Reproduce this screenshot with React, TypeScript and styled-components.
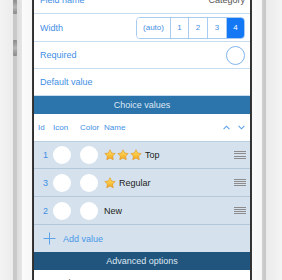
import styled, { createGlobalStyle } from "styled-components";

const Global = createGlobalStyle`
  html, body {
    margin: 0;
    padding: 0;
    background: #f2f2f2;
  }
  body {
    font-family: "Liberation Sans", Arial, sans-serif;
  }
`;

const Phone = styled.div`
  display: flex;
  width: 282px;
  height: 280px;
  overflow: hidden;
`;

const LeftBezel = styled.div`
  width: 34px;
  flex: none;
  display: flex;
  flex-direction: column;
  background: linear-gradient(
    to right,
    #f3f3f3 0,
    #ececec 13px,
    #c9c9c9 13px,
    #c9c9c9 17px,
    #dcdcdc 17px,
    #e6e6e6 22px,
    #fbfbfb 22px,
    #f7f7f7 32px,
    #3c3c3c 32px,
    #2a2a2a 34px
  );
`;

const SideButton = styled.div<{ $top: number; $h: number }>`
  margin-top: ${(p) => p.$top}px;
  margin-left: 13px;
  width: 4px;
  height: ${(p) => p.$h}px;
  background: linear-gradient(to bottom, #8a8a8a, #b5b5b5 50%, #8a8a8a);
  border-radius: 1px;
`;

const RightBezel = styled.div`
  flex: 1;
  background: linear-gradient(
    to right,
    #2e2e2e 0,
    #3a3a3a 2px,
    #fafafa 2px,
    #f6f6f6 12px,
    #cfcfcf 12px,
    #c6c6c6 16px,
    #ebebeb 16px,
    #f4f4f4 32px
  );
`;

const Screen = styled.div`
  width: 216px;
  flex: none;
  height: 280px;
  overflow: hidden;
  background: #fff;
  display: flex;
  flex-direction: column;
`;

const FormRow = styled.div<{ $h: number; $first?: boolean }>`
  display: flex;
  align-items: center;
  justify-content: space-between;
  flex: none;
  height: ${(p) => p.$h}px;
  margin-top: ${(p) => (p.$first ? -14 : 0)}px;
  padding: 0 5px 0 6px;
  box-sizing: border-box;
  border-bottom: 1px solid #c9ddf0;
`;

const Label = styled.span`
  color: #3f8fe4;
  font-size: 9px;
`;

const Value = styled.span`
  color: #555;
  font-size: 9px;
`;

const Segmented = styled.div`
  display: flex;
  height: 22px;
  box-sizing: border-box;
  border: 1px solid #a8cbf2;
  border-radius: 4px;
  overflow: hidden;
`;

const Segment = styled.div<{ $w: number; $on?: boolean }>`
  width: ${(p) => p.$w}px;
  box-sizing: border-box;
  display: flex;
  align-items: center;
  justify-content: center;
  font-size: 8px;
  color: ${(p) => (p.$on ? "#fff" : "#3f8fe4")};
  background: ${(p) => (p.$on ? "#1478f4" : "#fff")};
  & + & {
    border-left: 1px solid #a8cbf2;
  }
`;

const Toggle = styled.div`
  width: 19px;
  height: 19px;
  box-sizing: border-box;
  border-radius: 50%;
  border: 1px solid #80b5ef;
`;

const Band = styled.div<{ $dark?: boolean }>`
  flex: none;
  height: 18px;
  display: flex;
  align-items: center;
  justify-content: center;
  font-size: 9px;
  color: #dce8f3;
  background: ${(p) => (p.$dark ? "#22557d" : "#2c74ac")};
`;

const TableRow = styled.div<{ $head?: boolean; $h: number }>`
  flex: none;
  display: grid;
  grid-template-columns: 15px 27px 24px 1fr auto;
  align-items: center;
  height: ${(p) => p.$h}px;
  padding: 0 4px 0 4px;
  box-sizing: border-box;
  background: ${(p) => (p.$head ? "#fff" : "#d5e2ed")};
  border-bottom: 1px solid ${(p) => (p.$head ? "#b9cfe2" : "#b3c8da")};
`;

const HeadCell = styled.span`
  color: #3f8fe4;
  font-size: 8px;
`;

const IdCell = styled.span`
  color: #3f8fe4;
  font-size: 9px;
  text-align: right;
  padding-right: 5px;
`;

const Dot = styled.div`
  width: 18px;
  height: 18px;
  border-radius: 50%;
  background: #fff;
`;

const Name = styled.span`
  display: flex;
  align-items: center;
  gap: 1px;
  color: #222;
  font-size: 9px;
`;

const Sorters = styled.div`
  display: flex;
  gap: 8px;
  padding-right: 1px;
`;

const Grip = styled.div`
  width: 12px;
  height: 8px;
  display: flex;
  flex-direction: column;
  justify-content: space-between;
  span {
    height: 1px;
    background: #8c8c8c;
  }
`;

const AddRow = styled.div`
  flex: none;
  display: flex;
  align-items: center;
  gap: 7px;
  height: 27px;
  padding-left: 9px;
  background: #d5e2ed;
  color: #4a97e8;
  font-size: 9px;
`;

const Star = () => (
  <svg width="12" height="12" viewBox="0 0 24 24">
    <defs>
      <linearGradient id="sg" x1="0" y1="0" x2="0" y2="1">
        <stop offset="0" stopColor="#ffe46a" />
        <stop offset="1" stopColor="#f3a81c" />
      </linearGradient>
    </defs>
    <path
      d="M12 1.5l3.2 6.6 7.2 1-5.2 5.1 1.3 7.2L12 18l-6.5 3.4 1.3-7.2L1.6 9.1l7.2-1z"
      fill="url(#sg)"
      stroke="#e0901a"
      strokeWidth="1.2"
      strokeLinejoin="round"
    />
  </svg>
);

const Chevron = ({ up }: { up?: boolean }) => (
  <svg width="7" height="5" viewBox="0 0 7 5">
    <path
      d={up ? "M0.6 4.2L3.5 1.2L6.4 4.2" : "M0.6 0.8L3.5 3.8L6.4 0.8"}
      fill="none"
      stroke="#5aa0ea"
      strokeWidth="1.1"
    />
  </svg>
);

const Plus = () => (
  <svg width="13" height="13" viewBox="0 0 13 13">
    <path d="M6.5 0.5v12M0.5 6.5h12" stroke="#5ea2ea" strokeWidth="1" />
  </svg>
);

const values = [
  { id: 1, stars: 3, name: "Top" },
  { id: 3, stars: 1, name: "Regular" },
  { id: 2, stars: 0, name: "New" },
];

export default function App() {
  return (
    <>
      <Global />
      <Phone>
        <LeftBezel>
          <SideButton $top={0} $h={14} />
          <SideButton $top={26} $h={16} />
        </LeftBezel>
        <Screen>
          <FormRow $h={28} $first>
            <Label>Field name</Label>
            <Value>Category</Value>
          </FormRow>
          <FormRow $h={28}>
            <Label>Width</Label>
            <Segmented>
              <Segment $w={33}>(auto)</Segment>
              <Segment $w={18}>1</Segment>
              <Segment $w={19}>2</Segment>
              <Segment $w={19}>3</Segment>
              <Segment $w={18} $on>
                4
              </Segment>
            </Segmented>
          </FormRow>
          <FormRow $h={27}>
            <Label>Required</Label>
            <Toggle />
          </FormRow>
          <FormRow $h={27}>
            <Label>Default value</Label>
          </FormRow>
          <Band>Choice values</Band>
          <TableRow $head $h={28}>
            <HeadCell>Id</HeadCell>
            <HeadCell>Icon</HeadCell>
            <HeadCell>Color</HeadCell>
            <HeadCell>Name</HeadCell>
            <Sorters>
              <Chevron up />
              <Chevron />
            </Sorters>
          </TableRow>
          {values.map((v, i) => (
            <TableRow key={v.id} $h={i === 0 ? 27 : 28}>
              <IdCell>{v.id}</IdCell>
              <Dot />
              <Dot />
              <Name>
                {Array.from({ length: v.stars }).map((_, k) => (
                  <Star key={k} />
                ))}
                <span style={{ marginLeft: v.stars ? 2 : 0 }}>{v.name}</span>
              </Name>
              <Grip>
                <span />
                <span />
                <span />
                <span />
              </Grip>
            </TableRow>
          ))}
          <AddRow>
            <Plus />
            Add value
          </AddRow>
          <Band $dark>Advanced options</Band>
          <FormRow $h={27}>
            <Value>Sort values</Value>
          </FormRow>
        </Screen>
        <RightBezel />
      </Phone>
    </>
  );
}
